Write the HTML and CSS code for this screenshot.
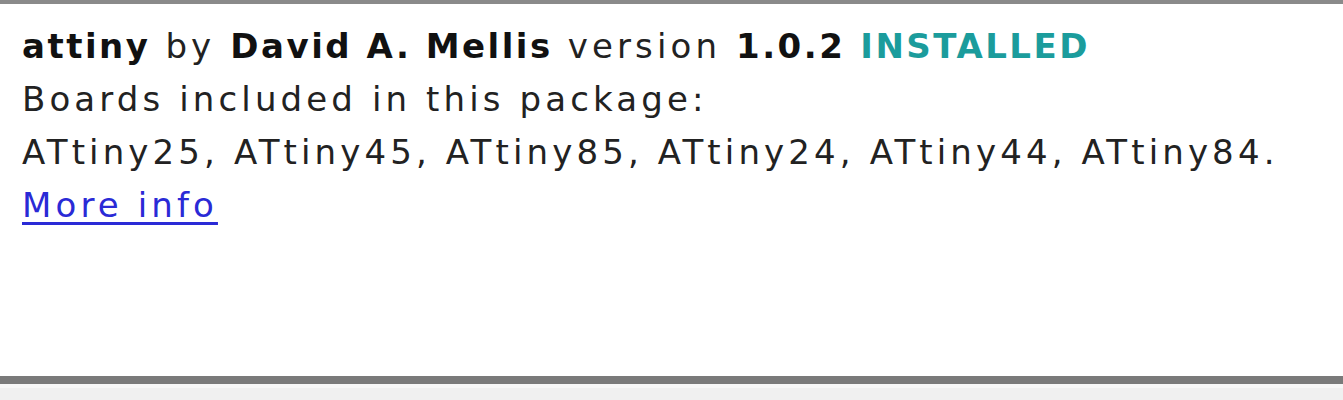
FILE: index.html
```html
<!DOCTYPE html>
<html lang="en">
<head>
    <meta charset="UTF-8">
    <title>Boards Manager</title>
    <link rel="stylesheet" href="styles.css">
</head>
<body>
    <div class="entry">
        <div class="line">
            <b>attiny</b> by <b>David A. Mellis</b> version <b>1.0.2</b> <b class="installed">INSTALLED</b>
        </div>
        <div class="line">Boards included in this package:</div>
        <div class="line">ATtiny25, ATtiny45, ATtiny85, ATtiny24, ATtiny44, ATtiny84.</div>
        <div class="line"><a href="#">More info</a></div>
    </div>
    <div class="footer"></div>
</body>
</html>
```

FILE: styles.css
```css
body {
    margin: 0;
    font-family: "DejaVu Sans", Verdana, sans-serif;
    background: #f0f0f0;
    color: #222;
}

.entry {
    background: #fff;
    border-top: 4px solid #8a8a8a;
    border-bottom: 8px solid #7a7a7a;
    height: 384px;
    box-sizing: border-box;
    padding: 16px 22px 0;
    font-size: 34px;
    line-height: 53px;
    letter-spacing: 4.12px;
}

.line {
    white-space: nowrap;
}

b {
    color: #111;
    letter-spacing: 2.5px;
}

.installed {
    color: #1b9c9c;
}

a {
    color: #2a2ad6;
    text-decoration-thickness: 3px;
    text-underline-offset: 5px;
}

.footer {
    height: 4px;
    background: #f7f7f7;
}
```
